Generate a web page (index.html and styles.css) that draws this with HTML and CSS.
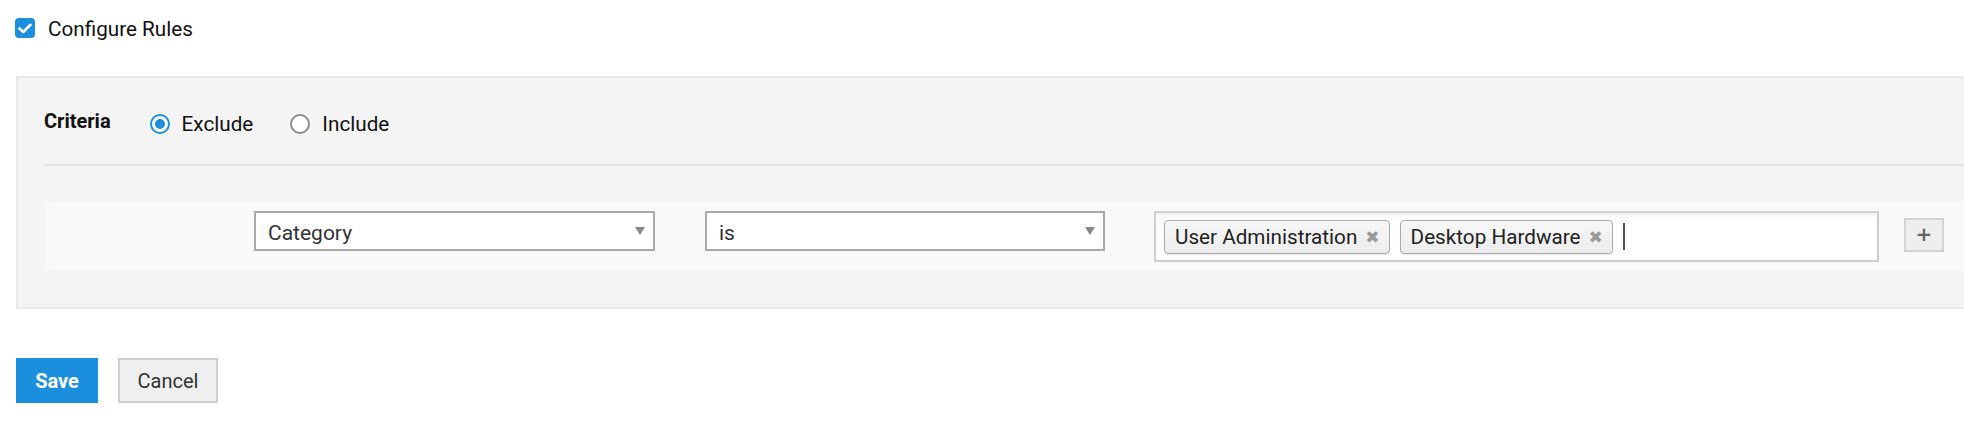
FILE: index.html
```html
<!DOCTYPE html>
<html lang="en">
<head>
<meta charset="utf-8">
<title>Configure Rules</title>
<link rel="stylesheet" href="styles.css">
</head>
<body>
<div class="page">
  <label class="head">
    <span class="checkbox">
      <svg width="14" height="11" viewBox="0 0 14 11"><path d="M1.5 5.5 L5.2 9 L12.5 1.8" fill="none" stroke="#fff" stroke-width="2.6" stroke-linecap="round" stroke-linejoin="round"/></svg>
    </span>
    <span class="head-text">Configure Rules</span>
  </label>

  <section class="panel">
    <div class="criteria">
      <span class="criteria-label">Criteria</span>
      <span class="radio-item"><span class="radio checked"></span><span>Exclude</span></span>
      <span class="radio-item"><span class="radio"></span><span>Include</span></span>
    </div>
    <div class="divider"></div>
    <div class="rule-row">
      <div class="select select-field"><span>Category</span><span class="caret"></span></div>
      <div class="select select-op"><span>is</span><span class="caret"></span></div>
      <div class="tags">
        <span class="tag">User Administration<span class="x">&#x2716;</span></span>
        <span class="tag">Desktop Hardware<span class="x">&#x2716;</span></span>
        <span class="cursor"></span>
      </div>
      <button class="plus">+</button>
    </div>
  </section>

  <div class="actions">
    <button class="btn save">Save</button>
    <button class="btn cancel">Cancel</button>
  </div>
</div>
</body>
</html>
```

FILE: styles.css
```css
html, body {
  margin: 0;
  padding: 0;
  background: #fff;
  overflow: hidden;
}
body {
  font-family: Roboto, "Liberation Sans", Arial, sans-serif;
  color: #111;
}
.page {
  width: 1964px;
}
.head {
  display: flex;
  align-items: center;
  height: 56px;
  padding: 0 0 20px 15px;
  box-sizing: content-box;
  gap: 13px;
}
.checkbox {
  width: 20px;
  height: 20px;
  border-radius: 4px;
  background: #1b8fdd;
  display: flex;
  align-items: center;
  justify-content: center;
}
.head-text {
  font-size: 20.7px;
  margin-top: 2px;
}
.panel {
  margin-left: 16px;
  width: 1980px;
  background: #f4f4f4;
  border: 2px solid #e8e8e8;
  box-sizing: border-box;
  padding: 0 0 37px 26px;
}
.criteria {
  display: flex;
  align-items: center;
  height: 86px;
  padding-top: 5px;
  box-sizing: border-box;
}
.criteria-label {
  font-weight: bold;
  font-size: 20px;
  margin-right: 39px;
  margin-top: -5px;
}
.radio-item {
  display: flex;
  align-items: center;
  font-size: 20.7px;
  margin-right: 37px;
  gap: 12px;
}
.radio {
  width: 20px;
  height: 20px;
  border-radius: 50%;
  border: 2px solid #8a8a8a;
  box-sizing: border-box;
  background: #fff;
  position: relative;
}
.radio.checked {
  border-color: #1b8fdd;
}
.radio.checked::after {
  content: "";
  position: absolute;
  left: 3px;
  top: 3px;
  width: 10px;
  height: 10px;
  border-radius: 50%;
  background: #1b8fdd;
}
.divider {
  height: 2px;
  background: #e2e2e2;
}
.rule-row {
  margin-top: 36px;
  margin-left: 2px;
  background: #f9f9f9;
  border-radius: 5px 0 0 5px;
  display: flex;
  align-items: flex-start;
  padding: 9px 0 8px 208px;
}
.select {
  height: 40px;
  box-sizing: border-box;
  border: 2px solid #a9a9a9;
  background: #fff;
  display: flex;
  align-items: center;
  justify-content: space-between;
  padding: 3px 8px 0 12px;
  font-size: 21px;
  color: #333;
}
.select .caret {
  margin-top: -3px;
}
.select-field {
  width: 401px;
}
.select-op {
  width: 400px;
  margin-left: 50px;
}
.caret {
  width: 0;
  height: 0;
  border-left: 5px solid transparent;
  border-right: 5px solid transparent;
  border-top: 8px solid #888;
}
.tags {
  margin-left: 49px;
  width: 725px;
  height: 51px;
  box-sizing: border-box;
  border: 2px solid #cfcfcf;
  background: #fff;
  box-shadow: inset 0 4px 5px -2px rgba(0, 0, 0, 0.07);
  display: flex;
  align-items: center;
  padding: 0 0 0 8px;
  gap: 10px;
}
.tag {
  height: 34px;
  box-sizing: border-box;
  border: 1px solid #aaa;
  border-radius: 4px;
  background: linear-gradient(#f7f7f7, #ececec);
  box-shadow: 0 1px 1px rgba(0, 0, 0, 0.08);
  display: flex;
  align-items: center;
  padding: 0 9px 0 10px;
  font-size: 20.7px;
  color: #222;
  gap: 8px;
}
.x {
  font-family: "DejaVu Sans", sans-serif;
  font-size: 17px;
  color: #999;
}
.cursor {
  width: 2px;
  height: 27px;
  background: #555;
}
.plus {
  margin-left: 25px;
  margin-top: 7px;
  width: 40px;
  height: 34px;
  box-sizing: border-box;
  border: 2px solid #d2d2d2;
  background: #eee;
  color: #666;
  font-family: "DejaVu Sans", sans-serif;
  font-weight: bold;
  font-size: 20px;
  line-height: 1;
  padding: 0 0 2px;
}
.actions {
  display: flex;
  gap: 20px;
  padding: 49px 0 0 16px;
}
.btn {
  height: 45px;
  box-sizing: border-box;
  font-family: Roboto, "Liberation Sans", Arial, sans-serif;
  font-size: 20px;
  padding: 0;
}
.save {
  width: 82px;
  background: #1b8fdd;
  color: #fff;
  border: none;
  font-weight: bold;
}
.cancel {
  width: 100px;
  background: #efefef;
  border: 2px solid #d0d0d0;
  color: #333;
}
```
